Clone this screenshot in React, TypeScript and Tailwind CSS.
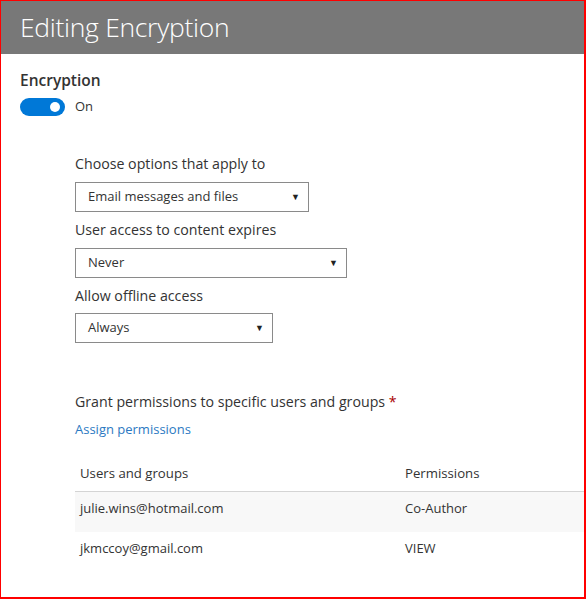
const font = { fontFamily: '"Open Sans", "Noto Sans", sans-serif' };

type SelectProps = { value: string; width: string };

function FakeSelect({ value, width }: SelectProps) {
  return (
    <div
      className={`${width} h-[30px] border border-[#8a8a8a] bg-white flex items-center justify-between pl-[12px] pr-[8px]`}
    >
      <span className="text-[13px] text-[#333]">{value}</span>
      <span className="text-[9px] text-[#222]">▼</span>
    </div>
  );
}

const rows = [
  { user: 'julie.wins@hotmail.com', permission: 'Co-Author' },
  { user: 'jkmccoy@gmail.com', permission: 'VIEW' },
];

export default function App() {
  return (
    <div
      style={font}
      className="w-[586px] h-[599px] bg-white border-l border-t border-r-2 border-b-2 border-[#ff0000] overflow-hidden"
    >
      <div className="h-[53px] bg-[#787878] flex items-center pl-[19px]">
        <h1 className="text-[26.5px] font-light text-white tracking-[-0.3px]">
          Editing Encryption
        </h1>
      </div>

      <div className="pl-[19px] pt-[16px]">
        <h2 className="text-[15.5px] font-semibold text-[#333] leading-[21px]">
          Encryption
        </h2>
        <div className="flex items-center gap-[10px] mt-[6px]">
          <div className="w-[45px] h-[18px] rounded-full bg-[#0078d7] flex items-center justify-end pr-[5px]">
            <div className="w-[10px] h-[10px] rounded-full bg-white" />
          </div>
          <span className="text-[13px] text-[#333]">On</span>
        </div>
      </div>

      <div className="pl-[74px] pt-[36px] text-[#333]">
        <div className="text-[14.2px] leading-[22px]">Choose options that apply to</div>
        <div className="mt-[7px]">
          <FakeSelect value="Email messages and files" width="w-[234px]" />
        </div>
        <div className="text-[14.2px] leading-[22px] mt-[7px]">
          User access to content expires
        </div>
        <div className="mt-[7px]">
          <FakeSelect value="Never" width="w-[272px]" />
        </div>
        <div className="text-[14.2px] leading-[22px] mt-[7px]">Allow offline access</div>
        <div className="mt-[6px]">
          <FakeSelect value="Always" width="w-[198px]" />
        </div>

        <div className="text-[14.2px] leading-[22px] mt-[48px]">
          Grant permissions to specific users and groups{' '}
          <span className="text-[#a80000]">*</span>
        </div>
        <a className="block text-[13px] text-[#2b79c2] mt-[7px]">Assign permissions</a>

        <div className="mt-[18px]">
          <div className="flex h-[35px] items-center border-b border-[#d4d4d4] text-[13.2px]">
            <div className="w-[330px] pl-[5px]">Users and groups</div>
            <div>Permissions</div>
          </div>
          {rows.map((row, i) => (
            <div
              key={row.user}
              className={`flex h-[40px] items-start pt-[7px] text-[13px] ${i === 0 ? 'bg-[#f8f8f8]' : ''}`}
            >
              <div className="w-[330px] pl-[5px]">{row.user}</div>
              <div>{row.permission}</div>
            </div>
          ))}
        </div>
      </div>
    </div>
  );
}
